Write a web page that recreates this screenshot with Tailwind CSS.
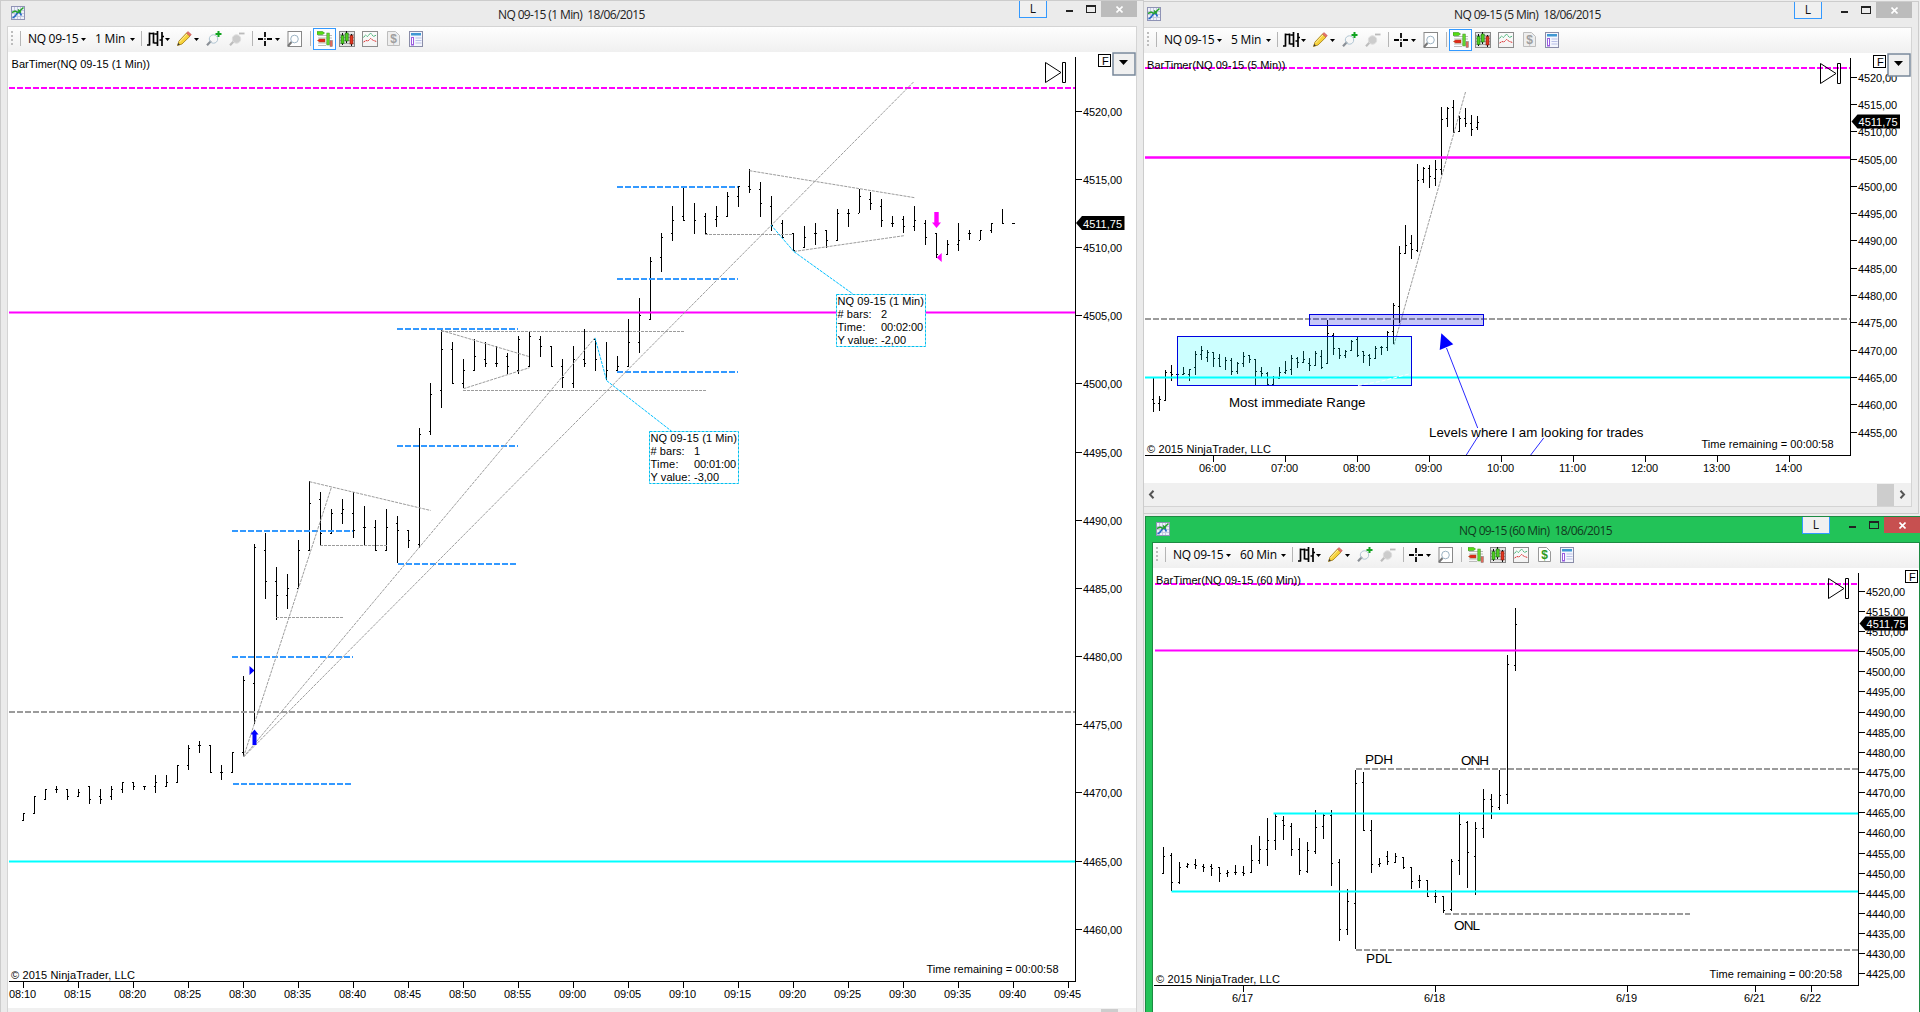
<!DOCTYPE html>
<html lang="en">
<head>
<meta charset="utf-8">
<title>NinjaTrader charts</title>
<script src="https://cdn.jsdelivr.net/npm/@tailwindcss/browser@4"></script>
</head>
<body class="w-[1920px] h-[1012px] overflow-hidden bg-[#ededed] font-['Open_Sans',sans-serif] text-xs text-black">

<!-- shared icon symbols -->
<svg class="hidden">
  <linearGradient id="lens" x1="0" y1="0" x2="1" y2="1"><stop offset="0" stop-color="#d5e9f6"/><stop offset="1" stop-color="#4f97cf"/></linearGradient>
  <linearGradient id="grayfill" x1="0" y1="0" x2="0" y2="1"><stop offset="0" stop-color="#e9e9e9"/><stop offset="1" stop-color="#b5b5b5"/></linearGradient>
  <symbol id="app" viewBox="0 0 14 14"><rect x=".5" y=".5" width="13" height="13" fill="#eef1fa" stroke="#8f93b5"/><path d="M3.500 1v12M6.500 1v12M9.500 1v12M1 4.500h12M1 7.500h12M1 10.500h12" stroke="#c5cae0" fill="none"/><path d="M1.500 12C4 11 4.500 10 6 7.500S9 6 10.500 9.500" stroke="#2467c4" stroke-width="1.600" fill="none"/><path d="M1 6.500 4 5l3 1.500L12.500 1.500M7 3.500l3 3" stroke="#27a32c" stroke-width="1.500" fill="none"/></symbol>
  <symbol id="bars" viewBox="0 0 17 16"><path d="M0 14h3M2.500 1.500v13M3 2.500h3M6.500 1.500v11M7 12h3M10.500 0v15M10.500 3h-3M15 1v14M12.500 9h2.500M15 5.500h2" stroke="#000" stroke-width="1.700" fill="none"/></symbol>
  <symbol id="pencil" viewBox="0 0 15 15"><path d="M.5 14.500 2 10l7.500-8 3.500 3.200L5 13z" fill="#f7d23b" stroke="#a07a10" stroke-width=".8"/><path d="M2.500 11 10 3" stroke="#fff1a0"/><path d="M9.500 2 11 .6 14.300 3.500 13 5.200z" fill="#e8726a" stroke="#b9504a" stroke-width=".5"/><path d="M.5 14.500 1.200 12l1.800 1.600z" fill="#333"/></symbol>
  <symbol id="zin" viewBox="0 0 16 15"><path d="M1 14.200 5 10" stroke="#8a8f96" stroke-width="2.200"/><circle cx="7.500" cy="8" r="4.200" fill="url(#lens)" stroke="#b0c5d3"/><path d="M12.500 0v6M9.500 3h6" stroke="#12a321" stroke-width="2"/></symbol>
  <symbol id="zout" viewBox="0 0 16 15"><path d="M1 14.200 5 10" stroke="#bdbdbd" stroke-width="2.200"/><circle cx="7.500" cy="8" r="4.200" fill="#ccc" stroke="#ddd"/><path d="M10 2.500h5.500" stroke="#bbb" stroke-width="1.800"/></symbol>
  <symbol id="cross" viewBox="0 0 14 14"><path d="M7 0v5M7 9v5M0 7h5M9 7h5M6.500 7h1" stroke="#000" stroke-width="1.800"/></symbol>
  <symbol id="magdoc" viewBox="0 0 15 16"><rect x="1" y=".5" width="13.500" height="15" fill="#fff" stroke="#888"/><path d="M1 15 4.500 11" stroke="#777" stroke-width="2"/><circle cx="7.500" cy="8" r="3.800" fill="url(#lens)" stroke="#9db4c4"/></symbol>
  <symbol id="trader" viewBox="0 0 16 16"><path d="M1 4.500h14M1 7h14M1 12h14M1 14.500h8" stroke="#bbb"/><path d="M0 .6h5.500L7.500 2 5.500 3.600H0z" fill="#55e010" stroke="#2c8a10" stroke-width=".6"/><path d="M8 8H2.500L.5 9.500 2.500 11H8z" fill="#e3261b" stroke="#951" stroke-width=".5"/><rect x="9.800" y="2" width="2.600" height="12" fill="#5fd72d" stroke="#4a8f2a" stroke-width=".5"/><rect x="13" y="9.500" width="2.400" height="6" fill="#e56a5a" stroke="#777" stroke-width=".5"/></symbol>
  <symbol id="candles" viewBox="0 0 16 16"><rect x=".5" y=".5" width="15" height="15" fill="#e4e4e4" stroke="#888"/><path d="M1 3.500h14M1 6.500h14M1 9.500h14M1 12.500h14" stroke="#aaa"/><path d="M3.500 2v12M7.500 0v12M12.500 3v12" stroke="#111"/><rect x="2" y="4.500" width="3" height="8" fill="#4fce20" stroke="#176a10" stroke-width=".6"/><rect x="6.200" y="2" width="3" height="8" fill="#4fce20" stroke="#176a10" stroke-width=".6"/><rect x="11" y="4.500" width="3" height="8.500" fill="#e3361f" stroke="#7a1a10" stroke-width=".6"/></symbol>
  <symbol id="area" viewBox="0 0 16 16"><rect x=".5" y=".5" width="15" height="15" fill="url(#grayfill)" stroke="#8c8c8c"/><path d="M1.500 6.500 3.500 4l2 1.500L8.500 2l3 3.500 3-1.500" stroke="#3cae6e" fill="none" stroke-dasharray="2 .6"/><path d="M1.500 11 4 9.500l2 .5 2.500-2.500 3 2 3 1" stroke="#d33" fill="none" stroke-dasharray="2 .6"/></symbol>
  <symbol id="dollar" viewBox="0 0 13 15"><path d="M.5 .5h8l4 4v10H.5z" fill="#eee" stroke="#bdbdbd"/><text x="6.500" y="11.800" text-anchor="middle" font-family="Liberation Sans,sans-serif" font-size="12" font-weight="700" fill="#9f9f9f">$</text></symbol>
  <symbol id="dollarOn" viewBox="0 0 13 15"><path d="M.5 .5h8l4 4v10H.5z" fill="#fff" stroke="#999"/><text x="6.500" y="11.800" text-anchor="middle" font-family="Liberation Sans,sans-serif" font-size="12" font-weight="700" fill="#2f9a1d">$</text></symbol>
  <symbol id="props" viewBox="0 0 14 16"><rect x=".5" y=".5" width="13" height="15" fill="#f4f6fd" stroke="#8a8da8"/><rect x="2" y="2" width="10" height="2.500" fill="#3f97d3"/><rect x="2.500" y="6.500" width="2" height="7.500" fill="#fff" stroke="#9a5ce0"/><path d="M6.500 7h6M6.500 9.500h6M6.500 12h6" stroke="#b9bfe6"/></symbol>
</svg>

<main class="flex h-[1012px] w-[1920px]">

  <!-- 1 minute window -->
  <section class="flex h-full w-[1144px] shrink-0 flex-col border-x border-t border-[#cccccc] bg-[#ebebeb]">
    <header class="flex h-[25px] items-start pl-[10px] pr-[6px]">
      <svg class="mt-[5px] size-[14px]"><use href="#app"/></svg>
      <h1 class="ml-[473px] mt-[4px] whitespace-pre leading-5 tracking-[-0.62px] text-[#222]">NQ 09-15 (1 Min)  18/06/2015</h1>
      <div data-controls class="ml-auto flex"></div>
    </header>
    <div class="ml-[6px] flex w-[1130px] flex-1 flex-col border-x border-t border-[#d4d4d4] bg-[#f0f0f0]">
      <div data-toolbar="1 Min" class="flex h-[25px] items-center rounded-bl-md bg-gradient-to-b from-[#fefefe] to-[#f0f0f0] pb-[2px]"></div>
      <svg id="c1" class="block h-[956px] w-[1128px] bg-white" viewBox="8 52 1128 956"></svg>
      <div class="flex h-1 justify-end pr-[18px] pt-px"><div class="w-[17px] bg-[#cdcdcd]"></div></div>
    </div>
  </section>

  <div class="flex w-[776px] flex-col">
    <!-- 5 minute window -->
    <section class="mt-px flex h-[513px] w-[775px] flex-col border-y border-r border-[#cccccc] bg-[#ebebeb]">
      <header class="flex h-[25px] items-start pl-[3px] pr-[6px]">
        <svg class="mt-[5px] size-[14px]"><use href="#app"/></svg>
        <h1 class="ml-[293px] mt-[3px] whitespace-pre leading-5 tracking-[-0.62px] text-[#222]">NQ 09-15 (5 Min)  18/06/2015</h1>
        <div data-controls class="ml-auto flex"></div>
      </header>
      <div class="flex h-[480px] w-[768px] flex-col border-y border-r border-[#d4d4d4] bg-[#f0f0f0]">
        <div data-toolbar="5 Min" class="flex h-[25px] items-center rounded-bl-md bg-gradient-to-b from-[#fefefe] to-[#f0f0f0] pb-[2px]"></div>
        <svg id="c2" class="block h-[430px] w-[767px] bg-white" viewBox="1144 53 767 430"></svg>
        <div class="flex h-[23px] items-center justify-between pl-[4px] pr-[5px]">
          <svg class="h-[9px] w-[7px]" viewBox="0 0 7 9"><path d="M5.500 .8 2 4.500l3.500 3.700" fill="none" stroke="#555" stroke-width="2"/></svg>
          <div class="flex h-full items-center gap-[5px]"><div class="h-[22px] w-[17px] bg-[#cdcdcd]"></div>
          <svg class="h-[9px] w-[7px]" viewBox="0 0 7 9"><path d="M1.500 .8 5 4.500 1.500 8.200" fill="none" stroke="#555" stroke-width="2"/></svg></div>
        </div>
      </div>
    </section>

    <!-- 60 minute window (active) -->
    <section class="ml-px mt-[2px] flex h-[496px] w-[775px] flex-col border-l border-t border-[#1c8a42] bg-[#22c358]">
      <header class="flex h-[25px] items-start pl-[10px]">
        <svg class="mt-[5px] size-[14px]"><use href="#app"/></svg>
        <h1 class="ml-[289px] mt-[4px] whitespace-pre leading-5 tracking-[-0.62px] text-[#113a1e]">NQ 09-15 (60 Min)  18/06/2015</h1>
        <div data-controls="active" class="ml-auto flex"></div>
      </header>
      <div class="ml-[6px] flex w-[768px] flex-1 flex-col border-x border-t border-[#1c8a42] bg-[#f0f0f0]">
        <div data-toolbar="60 Min" class="flex h-[25px] items-center rounded-bl-md bg-gradient-to-b from-[#fefefe] to-[#f0f0f0] pb-[2px]"></div>
        <svg id="c3" class="block h-[444px] w-[766px] bg-white" viewBox="1153 568 766 444"></svg>
      </div>
    </section>
  </div>
</main>

<script>
const caret = '<svg class="mt-[1px] h-[3px] w-[5px] shrink-0" viewBox="0 0 5 3"><path d="M0 0h5L2.500 3z"/></svg>';
const icon = (id, cls) => `<svg class="shrink-0 ${cls}"><use href="#${id}"/></svg>`;
const sep = m => `<i class="h-[15px] w-px shrink-0 bg-[#b5b5b5] ${m}"></i>`;

document.querySelectorAll('[data-controls]').forEach(el => {
  const on = el.dataset.controls === 'active';
  el.innerHTML = `
    <div class="h-[17px] w-[28px] border-x border-b border-[#3399ff] bg-[#f0f0f0] text-center leading-[16px] text-[#111]">L</div>
    <div class="ml-[19px] mt-[9px] h-[2px] w-[7px] bg-[#222]"></div>
    <div class="ml-[13px] mt-[4px] h-[8px] w-[10px] border border-t-2 border-[#222]"></div>
    <div class="ml-[5px] flex h-[16px] w-[36px] items-center justify-center ${on ? 'bg-[#c75050]' : 'bg-[#bcbcbc]'}">
      <svg class="size-[7px]" viewBox="0 0 7 7"><path d="M.5 .5l6 6M6.500 .5l-6 6" stroke="#fff" stroke-width="1.600"/></svg>
    </div>`;
});

document.querySelectorAll('[data-toolbar]').forEach(el => {
  const iv = el.dataset.toolbar, on = iv === '60 Min';
  el.innerHTML = `
    <i class="ml-[3px] h-[15px] w-[2px] shrink-0 bg-[repeating-linear-gradient(to_bottom,#bdbdbd_0_2px,transparent_2px_4px)]"></i>
    ${sep('ml-[7px]')}
    <span class="ml-[7px] w-[53px] shrink-0 whitespace-nowrap tracking-[-0.3px]">NQ 09-15</span>${caret}
    <span class="ml-[9px] shrink-0 whitespace-nowrap tracking-[-0.2px] ${on ? 'w-[41px]' : 'w-[35px]'}">${iv}</span>${caret}
    ${sep('ml-[6px]')}
    ${icon('bars', 'ml-[5px] h-[16px] w-[17px]')}<b class="w-px"></b>${caret}
    ${icon('pencil', 'ml-[7px] h-[15px] w-[15px]')}<b class="w-[2px]"></b>${caret}
    ${icon('zin', 'ml-[7px] h-[15px] w-[16px]')}
    ${icon('zout', 'ml-[7px] h-[15px] w-[16px]')}
    ${sep('ml-[7px]')}
    ${icon('cross', 'ml-[5px] h-[14px] w-[14px]')}<b class="w-[3px]"></b>${caret}
    ${icon('magdoc', 'ml-[7px] h-[16px] w-[15px]')}
    ${sep('ml-[8px]')}
    <div class="ml-[2px] flex h-[22px] w-[23px] shrink-0 items-center justify-center ${on ? '' : 'border border-[#3399ff] bg-[#fbfdff]'}">${icon('trader', 'h-[16px] w-[16px]')}</div>
    ${icon('candles', 'ml-[3px] h-[16px] w-[16px]')}
    ${icon('area', 'ml-[7px] h-[16px] w-[16px]')}
    ${icon(on ? 'dollarOn' : 'dollar', 'ml-[9px] h-[15px] w-[13px]')}
    ${icon('props', 'ml-[9px] h-[16px] w-[14px]')}`;
});

/* ---- chart drawing helpers ---- */
const F = 'font-family="Liberation Sans,Arial,sans-serif"';
const txt = (x, y, s, w, size = 11, fill = '#000') =>
  `<text x="${x}" y="${y}" ${F} font-size="${size}" fill="${fill}" textLength="${w}" xml:space="preserve">${s}</text>`;
const solid = (x1, x2, y, c, w = 2) => `<path d="M${x1} ${y + .5}H${x2}" stroke="${c}" stroke-width="${w}"/>`;
const dash = (x1, x2, y, c) => `<path d="M${x1} ${y}H${x2}" stroke="${c}" stroke-width="2" stroke-dasharray="6 2" shape-rendering="crispEdges"/>`;
const trend = (x1, y1, x2, y2, c = '#9c9c9c') => `<path d="M${x1} ${y1}L${x2} ${y2}" stroke="${c}" stroke-dasharray="3 1"/>`;
/* each row: base y | bars "high,low,open,close" in thirds of a pixel below the base */
function ohlc(x0, step, rows) {
  let d = '', n = 0;
  rows.forEach(([base, list]) => list.trim().split(/\s+/).forEach(b => {
    const [h, l, o, c] = b.split(',').map(Number), x = x0 + step * n++;
    const y = v => base + Math.floor(v / 3);
    d += `M${x} ${y(h)}h1V${Math.max(y(h) + 1, base + Math.round(l / 3))}h-1z`;
    if (!isNaN(o)) d += `M${x - 1} ${y(o)}h1v1h-1z`;
    if (!isNaN(c)) d += `M${x + 1} ${y(c)}h1v1h-1z`;
  }));
  return `<path d="${d}" shape-rendering="crispEdges"/>`;
}
function axes(left, x, top, y, prices, times, ly) {
  let s = `<path d="M${x} ${top}h1V${y + 1}H${left}v-1H${x}z" shape-rendering="crispEdges"/>`;
  prices.forEach(([p, py]) => s += `<path d="M${x} ${py}h7v1h-7z" shape-rendering="crispEdges"/>` + txt(x + 8, py + 5, p + ',00', 39));
  times.forEach(([t, tx]) => {
    const w = t.length > 4 ? 27 : 21;
    s += `<path d="M${tx} ${y}h1v7h-1z" shape-rendering="crispEdges"/>` + txt(tx - w / 2 - .5, ly, t, w);
  });
  return s;
}
const tag = (x, y) => `<path d="M${x} ${y}l6-7h42.500v14H${x + 6}z"/>` + txt(x + 7, y + 4.500, '4511,75', 39, 11, '#fff');
const play = (x, y) => `<path d="M${x} ${y}l15.500 10-15.500 10zM${x + 17} ${y}h3v20h-3z" fill="none" stroke="#000"/>`;
const fbox = (x, y) => `<rect x="${x + .5}" y="${y + .5}" width="12" height="12" fill="#fff" stroke="#000"/>` + txt(x + 4, y + 10.500, 'F', 6);
const drop = (x, y) => `<rect x="${x + 1}" y="${y + 1}" width="22" height="22" fill="#f0f0f0" stroke="#78889a" stroke-width="1.500"/><path d="M${x + 7} ${y + 8}h9l-4.500 5z"/>`;
const series = (from, y0, step, n) => Array.from({length: n}, (_, i) => [from - 5 * i, Math.floor(y0 + step * i)]);
const ruler = (x, y, bars, time, val) => `<rect x="${x + .5}" y="${y + .5}" width="89" height="52" fill="#fff" stroke="#00bfef" stroke-dasharray="3 1"/>`
  + txt(x + 1.5, y + 11, 'NQ 09-15 (1 Min)', 86.5) + txt(x + 1.5, y + 24, '# bars:', 34) + txt(x + 45, y + 24, bars, 6)
  + txt(x + 1.5, y + 37, 'Time:', 28) + txt(x + 45, y + 37, time, 42) + txt(x + 1.5, y + 50, 'Y value:', 40) + txt(x + 45, y + 50, val, 25);
const M = '#ff00ff', C = '#00ffff', G = '#9b9b9b', B = '#3399ff', Z = '#00bfff';

/* ---- 1 minute chart ---- */
const t1 = Array.from({length: 20}, (_, i) => {
  const m = 10 + 5 * i;
  return [(m < 60 ? '08:' : '09:') + String(m % 60).padStart(2, '0'), 23 + 55 * i];
});
c1.innerHTML =
  ohlc(23, 11, [
    [640, `519,542,542,519 469,521,520,469 448,479,479,448 438,459,448,448 448,479,448,469 448,470,469,457 438,491,438,478
      448,491,469,478 438,479,469,448 427,459,448,427 427,449,427,439 438,449,438,438 405,459,438,427 405,440,438,427
      376,428,427,376 315,389,376,325 303,338,317,317 315,398,315,397 376,419,398,398 337,398,397,337 110,349,337,121`],
    [440, `312,853,730,322 279,477,332,425 381,540,425,466 402,507,466,446 300,446,445,332 125,332,331,190 156,316,178,280
      207,281,280,220 177,252,220,208 157,293,220,271 198,315,262,262 240,332,262,331 207,332,331,262 228,370,250,271 270,323,271,301`],
    [290, `414,773,763,433 279,434,425,313 118,353,301,178 156,281,178,280 207,293,280,241 147,242,241,199 156,230,208,220
      168,230,220,220 189,252,198,230 138,251,241,148 126,231,230,138 138,200,148,169 168,230,168,229 207,293,229,262
      168,293,280,208 117,230,208,220 147,242,148,208 156,270,-,241 198,245,241,229 88,230,229,157 24,190,157,76`],
    [150, `321,509,508,333 250,366,322,262 168,272,250,211 112,212,199,211 159,252,-,211 189,252,199,251 168,231,208,199
      126,200,199,139 109,170,139,109 57,128,109,118 96,200,118,160 138,242,169,225 210,263,220,262 250,303,250,302
      228,293,292,262 220,285,250,250 240,293,240,270 177,272,271,190 177,230,190,190 117,190,190,139 126,180,148,160
      147,231,169,211 198,230,220,220 198,250,208,229 168,242,229,211 210,284,220,262 250,323,250,314 270,315,314,283
      219,303,283,271 240,271,250,250 240,271,271,240 219,250,240,220 177,221,-,220 219,222,220,220`]])
  + dash(9, 1075, 88, M) + solid(9, 1075, 312, M) + dash(9, 1075, 712, G) + solid(9, 1075, 861, C)
  + dash(232, 353, 657, B) + dash(233, 353, 784, B) + dash(232, 353, 531, B)
  + dash(397, 518, 446, B) + dash(398, 518, 564, B) + dash(397, 518, 329, B)
  + dash(617, 738, 372, B) + dash(617, 738, 187, B) + dash(617, 738, 279, B)
  + trend(243.5, 757, 331.5, 487) + trend(243.5, 757, 595, 337.7) + trend(243.5, 757, 914, 81.5)
  + trend(309.5, 481.7, 430.7, 510.5) + trend(320, 545.5, 387, 545.5) + trend(276, 617.5, 343, 617.5)
  + trend(441.5, 330.5, 529.5, 356.7) + trend(441, 331.5, 684, 331.5) + trend(463.5, 388.7, 529.5, 367.7)
  + trend(463, 390.5, 706, 390.5) + trend(705, 234.5, 793, 234.5) + trend(749.5, 170.7, 914.7, 197.7) + trend(794, 251.5, 904, 235.7)
  + trend(595, 338, 606.7, 380.7, Z) + trend(606.7, 380.7, 671.7, 431.3, Z)
  + trend(771, 225, 794, 251.7, Z) + trend(794, 251.7, 853, 294, Z)
  + ruler(649, 431, '1', '00:01:00', '-3,00') + ruler(836, 294, '2', '00:02:00', '-2,00')
  + '<path d="M254.500 729.500l4 5h-2v10.500h-4v-10.500h-2zM249.500 666v9l5-4.500z" fill="#0000ff"/>'
  + '<path d="M936.500 228l-4.500-5.500h2.300V212h4.400v10.500h2.300zM941.700 253v9l-5-4.500z" fill="#ff00ff"/>'
  + txt(11.500, 68, 'BarTimer(NQ 09-15 (1 Min))', 138.500)
  + txt(11, 978.500, '© 2015 NinjaTrader, LLC', 124) + txt(926.5, 973, 'Time remaining = 00:00:58', 132)
  + axes(9, 1075, 57, 981, series(4520, 111.35, 68.150, 13), t1, 998)
  + tag(1076, 223) + play(1045.5, 62.5) + fbox(1098, 54) + drop(1112, 52);

/* ---- 5 minute chart ---- */
c2.innerHTML =
  ohlc(1153, 6, [
    [270, `322,426,388,400 378,423,400,387 300,392,390,307 285,333,308,313 300,316,313,313 291,315,313,310 297,333,313,297
      243,316,292,254 228,270,254,240 240,275,262,246 246,292,247,266 252,292,266,290 262,300,-,272 264,316,272,303
      276,312,303,279 246,291,280,258 255,280,256,267 267,346,268,303 291,323,303,310 306,346,310,344 318,344,344,322
      291,327,325,308 273,312,308,300 256,315,297,264 261,294,264,276 243,279,276,268 264,303,279,285 243,288,285,249
      240,298,258,292 150,282,279,190 189,255,196,235 234,268,235,255 240,264,256,243 210,243,240,213 200,262,208,255
      243,278,244,256 252,288,256,264 230,267,265,236 228,255,232,232 183,243,232,186 99,223,184,105`],
    [80, `498,728,678,520 435,521,520,495 465,537,490,508 252,516,512,300 261,308,297,264 255,323,264,288 240,318,294,267
      81,285,268,117 81,140,115,84 60,160,82,158 108,155,153,115 84,140,115,129 105,167,130,148 108,150,143,127`]])
  + dash(1145, 1850, 68, M) + solid(1145, 1850, 157, M, 2.6) + dash(1145, 1850, 319, G) + solid(1145, 1850, 377, C)
  + trend(1394, 345, 1465.5, 92)
  + '<rect x="1177.500" y="336.500" width="234" height="49" fill="#00ffff" fill-opacity=".2" stroke="#0000e0"/>'
  + '<rect x="1309.500" y="314.500" width="174" height="11" fill="#0000e0" fill-opacity=".22" stroke="#0000e0"/>'
  + '<path d="M1358 385.500l22-4 31-8" fill="none" stroke="#fff" stroke-dasharray="4 2"/>'
  + '<path d="M1446.500 348 1477.700 428M1477.700 437l-11.400 18M1543.700 438l-13 17" stroke="#2a2aff" fill="none"/><path d="M1441.300 333.300l12 11-13.600 5.700z" fill="#0000ff"/>'
  + txt(1229, 407, 'Most immediate Range', 136.5, 13.3) + txt(1429, 437, 'Levels where I am looking for trades', 214.5, 13.3)
  + txt(1147, 69, 'BarTimer(NQ 09-15 (5 Min))', 138.500)
  + txt(1147, 453, '© 2015 NinjaTrader, LLC', 124) + txt(1701.5, 448, 'Time remaining = 00:00:58', 132)
  + axes(1145, 1850, 58, 455, series(4520, 77.1, 27.300, 14), ['06', '07', '08', '09', '10', '11', '12', '13', '14'].map((h, i) => [h + ':00', 1213 + 72 * i]), 472)
  + tag(1851.5, 121.5) + play(1820.5, 63.5) + fbox(1873, 55) + drop(1887, 53);

/* ---- 60 minute chart ---- */
c3.innerHTML =
  ohlc(1163, 8, [
    [740, `321,402,400,348 339,454,346,427 366,431,427,381 369,384,380,374 357,388,374,376 372,395,380,381 372,407,380,385
      381,425,381,400 390,411,400,397 375,405,397,396 378,407,397,400 315,399,397,361 288,371,361,327 234,378,328,301
      222,330,301,229 228,299,241,256 249,347,259,328 294,405,328,391 306,400,394,331 210,341,334,262 222,296,259,226
      210,438,227,369 357,602,368,568 447,584,568,484 90,628,489,130 96,272,128,270 240,398,271,373 354,381,373,370
      333,376,348,364 339,370,366,348 351,386,352,381 381,446,382,424 405,444,420,420 420,470,421,469 450,488,469,469
      468,520,469,511 357,512,508,364 216,405,361,253 243,443,246,337 246,465,349,265 147,294,265,178 162,236,178,199 90,211,202,166`],
    [500, `465,912,883,493 324,513,496,373`]])
  + dash(1155, 1858, 584, M) + solid(1155, 1858, 650, M) + dash(1356, 1858, 769, G) + solid(1273.5, 1858, 813, C)
  + solid(1171.5, 1858, 891, C) + dash(1445, 1690, 914, G) + dash(1356, 1858, 950, G)
  + txt(1365, 764, 'PDH', 28, 13.5) + txt(1461, 764.5, 'ONH', 28, 13.5) + txt(1454, 930, 'ONL', 26, 13.5) + txt(1366, 963, 'PDL', 26, 13.5)
  + txt(1156, 584, 'BarTimer(NQ 09-15 (60 Min))', 145)
  + txt(1156, 983, '© 2015 NinjaTrader, LLC', 124) + txt(1709.5, 978, 'Time remaining = 00:20:58', 132.5)
  + axes(1154, 1858, 573, 985, series(4520, 591.15, 20.145, 20), [['6/17', 1243], ['6/18', 1435], ['6/19', 1627], ['6/21', 1755], ['6/22', 1811]], 1002)
  + tag(1859.5, 623.5) + play(1828.5, 578.5) + fbox(1905, 570);
</script>
</body>
</html>
